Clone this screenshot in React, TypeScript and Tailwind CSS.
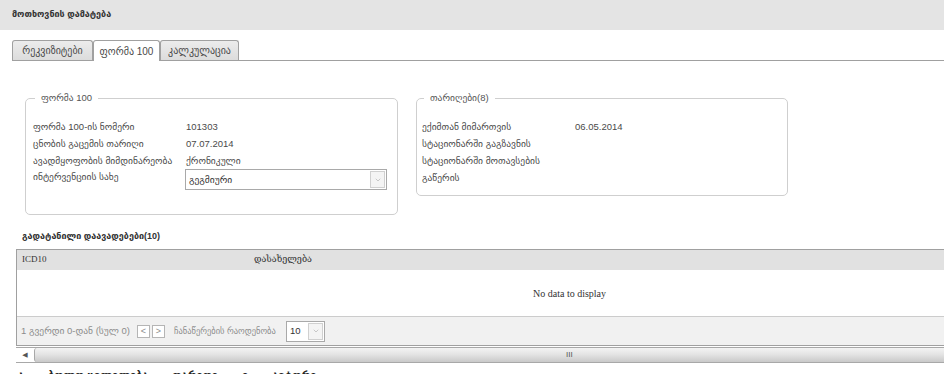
import { ChevronDown } from 'lucide-react';

const ff = "font-['Liberation_Sans','DejaVu_Sans',sans-serif]";

function Row({ label, value }: { label: string; value?: string }) {
  return (
    <div className="flex h-[17px] items-center">
      <div className="w-[153px] shrink-0">{label}</div>
      <div>{value}</div>
    </div>
  );
}

function SelectBox({ value, w }: { value: string; w: string }) {
  return (
    <div className={`flex h-[21px] items-center border border-[#a9a9a9] bg-white ${w}`}>
      <div className="flex-1 pl-[3px] text-[#333]">{value}</div>
      <div className="mr-[1px] flex h-[17px] w-[15px] items-center justify-center border border-[#d0d0d0] bg-[#f4f4f4]">
        <ChevronDown className="h-[8px] w-[8px] text-[#b0b0b0]" strokeWidth={2} />
      </div>
    </div>
  );
}

export default function App() {
  return (
    <div className={`h-[374px] w-[944px] overflow-hidden bg-white text-[9.5px] text-[#4a4a4a] ${ff}`}>
      <div className="flex h-[30px] items-center bg-[#e4e4e4] px-[12px] text-[9px] font-bold text-[#333]">
        მოთხოვნის დამატება
      </div>

      <div className="ml-[12px] mt-[10px] flex h-[21px] items-end border-b border-[#a0a0a0] text-[10px]">
        <div className="flex h-[20px] w-[81px] items-center justify-center rounded-t-[3px] border border-b-0 border-[#a0a0a0] bg-gradient-to-b from-[#ececec] to-[#dcdcdc]">
          რეკვიზიტები
        </div>
        <div className="-mb-px flex h-[21px] w-[67px] items-center justify-center rounded-t-[3px] border border-b-0 border-[#a0a0a0] bg-white">
          ფორმა 100
        </div>
        <div className="flex h-[20px] w-[79px] items-center justify-center rounded-t-[3px] border border-b-0 border-[#a0a0a0] bg-gradient-to-b from-[#ececec] to-[#dcdcdc]">
          კალკულაცია
        </div>
      </div>

      <div className="ml-[25px] mt-[30px] flex items-start gap-[18px]">
        <fieldset className="h-[124px] w-[373px] rounded-[5px] border border-[#cfcfcf] px-[7px] pt-[13px]">
          <legend className="ml-[2px] px-[6px] text-[#555]">ფორმა 100</legend>
          <Row label="ფორმა 100-ის ნომერი" value="101303" />
          <Row label="ცნობის გაცემის თარიღი" value="07.07.2014" />
          <Row label="ავადმყოფობის მიმდინარეობა" value="ქრონიკული" />
          <div className="flex h-[24px] items-start">
            <div className="w-[152px] shrink-0 pt-[1px]">ინტერვენციის სახე</div>
            <SelectBox value="გეგმიური" w="w-[202px]" />
          </div>
        </fieldset>

        <fieldset className="h-[105px] w-[372px] rounded-[5px] border border-[#cfcfcf] px-[5px] pt-[13px]">
          <legend className="ml-[2px] px-[6px] text-[#555]">თარიღები(8)</legend>
          <Row label="ექიმთან მიმართვის" value="06.05.2014" />
          <Row label="სტაციონარში გაგზავნის" />
          <Row label="სტაციონარში მოთავსების" />
          <Row label="გაწერის" />
        </fieldset>
      </div>

      <div className="ml-[22px] mt-[15px] h-[19px] text-[9px] font-bold text-[#333]">გადატანილი დაავადებები(10)</div>

      <div className="ml-[16px] w-[960px] border-l border-t border-[#a0a0a0]">
        <div className="flex h-[20px] items-center bg-[#e1e1e1] px-[5px] font-['Liberation_Serif','DejaVu_Serif',serif] text-[9px] text-[#333]">
          <div className="w-[232px]">ICD10</div>
          <div>დასახელება</div>
        </div>
        <div className="flex h-[46px] items-center pl-[516px] font-['Liberation_Serif','DejaVu_Serif',serif] text-[10px] text-[#333]">
          No data to display
        </div>
        <div className="flex h-[30px] items-center border-t border-b border-t-[#cccccc] border-b-[#a0a0a0] bg-[#f1f1f1] pl-[4px] text-[#8c8c8c]">
          <span className="w-[116px]">1 გვერდი 0-დან (სულ 0)</span>
          <span className="flex h-[13px] w-[13px] items-center justify-center border border-[#b5b5b5] bg-white text-[9px] leading-none">&lt;</span>
          <span className="ml-[2px] flex h-[13px] w-[13px] items-center justify-center border border-[#b5b5b5] bg-white text-[9px] leading-none">&gt;</span>
          <span className="ml-[9px] w-[112px] whitespace-nowrap text-[8.5px]">ჩანაწერების რაოდენობა</span>
          <SelectBox value="10" w="w-[39px]" />
        </div>
      </div>

      <div className="ml-[16px] mt-[1px] flex h-[16px] w-[960px] items-center border-y border-[#a8a8a8] bg-white">
        <div className="flex w-[18px] items-center justify-center text-[7px] text-[#555]">◀</div>
        <div className="flex h-[14px] flex-1 items-center rounded-l-[3px] border-l border-[#a8a8a8] bg-gradient-to-b from-[#f4f4f4] via-[#e2e2e2] to-[#c9c9c9] pl-[531px] text-[8px] text-[#555]">
          III
        </div>
      </div>

      <div className="ml-[18px] mt-[4px] flex gap-[24px] text-[11px] font-bold text-[#222]">
        <span>ა</span>
        <span>ბოლო ცვლილება</span>
        <span>თარიღი</span>
        <span>ი</span>
        <span>ავტორი</span>
      </div>
    </div>
  );
}
